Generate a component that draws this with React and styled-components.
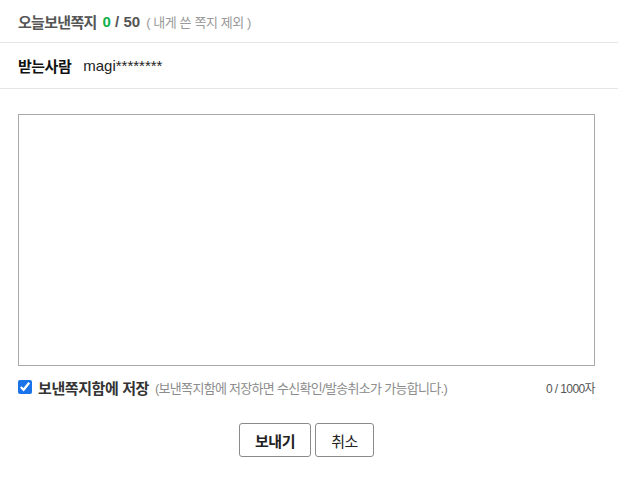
import React, { useState } from 'react';
import styled, { createGlobalStyle } from 'styled-components';

const GlobalStyle = createGlobalStyle`
  body {
    margin: 0;
    background: #fff;
    font-family: "Liberation Sans", "Noto Sans CJK KR", sans-serif;
    color: #222;
  }
`;

const Wrap = styled.div`
  width: 618px;
`;

const Header = styled.div`
  height: 42px;
  padding: 0 18px;
  display: flex;
  align-items: center;
  border-bottom: 1px solid #e6e6e6;
  font-size: 15px;
  letter-spacing: -0.7px;
`;

const HeadTitle = styled.span`
  font-weight: bold;
  color: #555;
`;

const Count = styled.span`
  margin-left: 6px;
  font-weight: bold;
  font-size: 15px;
  color: #555;
  letter-spacing: 0;
  b {
    color: #0db14b;
  }
`;

const Note = styled.span`
  margin-left: 6px;
  font-size: 13px;
  color: #999;
  letter-spacing: -0.4px;
`;

const Recipient = styled.div`
  height: 45px;
  padding: 0 18px;
  display: flex;
  align-items: center;
  border-bottom: 1px solid #e6e6e6;
  font-size: 15px;
`;

const Label = styled.span`
  font-weight: bold;
  color: #111;
  letter-spacing: -0.5px;
  margin-right: 12px;
`;

const Body = styled.div`
  padding: 25px 23px 0 18px;
`;

const Box = styled.textarea`
  display: block;
  box-sizing: border-box;
  width: 577px;
  height: 252px;
  border: 1px solid #a9a9a9;
  resize: none;
  outline: none;
  margin: 0;
`;

const Options = styled.div`
  margin-top: 11px;
  height: 20px;
  display: flex;
  align-items: center;
`;

const Check = styled.input`
  width: 14px;
  height: 14px;
  margin: 0 6px 0 0;
  accent-color: #1a73e8;
`;

const SaveLabel = styled.label`
  font-size: 15px;
  font-weight: bold;
  color: #333;
  letter-spacing: -0.4px;
`;

const Hint = styled.span`
  margin-left: 6px;
  font-size: 13px;
  color: #8c8c8c;
  letter-spacing: -0.7px;
`;

const Counter = styled.span`
  margin-left: auto;
  font-size: 12px;
  color: #555;
  letter-spacing: -0.6px;
`;

const Buttons = styled.div`
  margin-top: 26px;
  display: flex;
  justify-content: center;
  gap: 4px;
  padding-right: 5px;
`;

const Button = styled.button`
  height: 34px;
  padding: 0;
  width: ${({ $w }) => $w}px;
  border: 1px solid #8a8a8a;
  border-radius: 3px;
  background: #fff;
  font-family: inherit;
  font-size: 15px;
  font-weight: ${({ $bold }) => ($bold ? 'bold' : 'normal')};
  color: #222;
  letter-spacing: -0.5px;
`;

export default function App() {
  const [text, setText] = useState('');
  return (
    <Wrap>
      <GlobalStyle />
      <Header>
        <HeadTitle>오늘보낸쪽지</HeadTitle>
        <Count>
          <b>0</b> / 50
        </Count>
        <Note>( 내게 쓴 쪽지 제외 )</Note>
      </Header>
      <Recipient>
        <Label>받는사람</Label>
        <span>magi********</span>
      </Recipient>
      <Body>
        <Box value={text} onChange={(e) => setText(e.target.value)} />
        <Options>
          <Check type="checkbox" id="save" defaultChecked />
          <SaveLabel htmlFor="save">보낸쪽지함에 저장</SaveLabel>
          <Hint>(보낸쪽지함에 저장하면 수신확인/발송취소가 가능합니다.)</Hint>
          <Counter>{text.length} / 1000자</Counter>
        </Options>
      </Body>
      <Buttons>
        <Button $w={72} $bold>보내기</Button>
        <Button $w={59}>취소</Button>
      </Buttons>
    </Wrap>
  );
}
